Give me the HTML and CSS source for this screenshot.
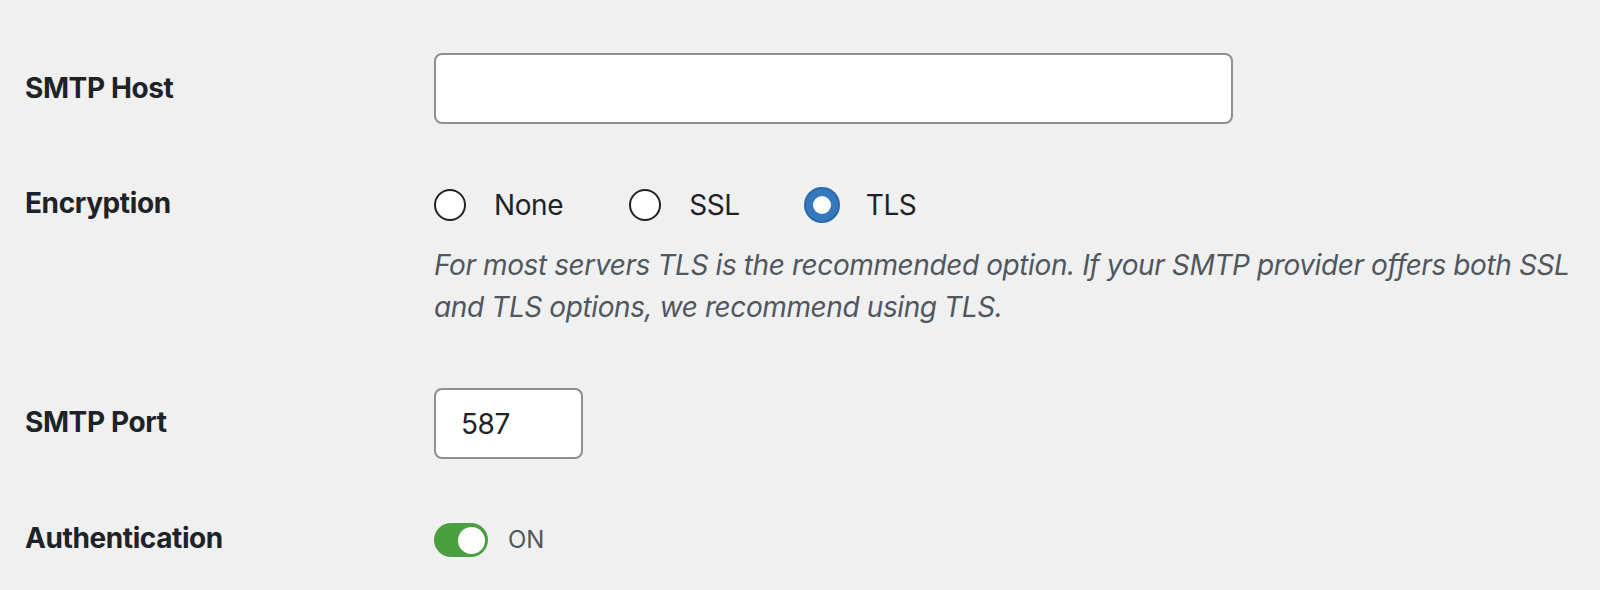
FILE: index.html
```html
<!DOCTYPE html>
<html lang="en">
<head>
<meta charset="utf-8">
<title>SMTP Settings</title>
<link rel="stylesheet" href="styles.css">
</head>
<body>
<div class="form">
  <div class="row row-host">
    <label class="label" for="host">SMTP Host</label>
    <div class="field">
      <input id="host" class="input input-wide" type="text" value="">
    </div>
  </div>

  <div class="row row-enc">
    <div class="label">Encryption</div>
    <div class="field">
      <div class="radios">
        <label class="option"><span class="radio"></span><span class="opt-text">None</span></label>
        <label class="option"><span class="radio"></span><span class="opt-text">SSL</span></label>
        <label class="option"><span class="radio checked"></span><span class="opt-text">TLS</span></label>
      </div>
      <p class="description">For most servers TLS is the recommended option. If your SMTP provider offers both SSL and TLS options, we recommend using TLS.</p>
    </div>
  </div>

  <div class="row row-port">
    <label class="label" for="port">SMTP Port</label>
    <div class="field">
      <input id="port" class="input input-small" type="text" value="587">
    </div>
  </div>

  <div class="row row-auth">
    <div class="label">Authentication</div>
    <div class="field toggle-field">
      <span class="toggle"><span class="knob"></span></span>
      <span class="toggle-text">ON</span>
    </div>
  </div>
</div>
</body>
</html>
```
FILE: styles.css
```css
html, body {
  margin: 0;
  padding: 0;
  background: #f0f0f1;
}

body {
  font-family: Inter, "Noto Sans", sans-serif;
  color: #1d2327;
  font-size: 28px;
  line-height: 42px;
}

.form {
  display: flex;
  flex-direction: column;
  padding-top: 53px;
}

.row {
  display: flex;
  align-items: flex-start;
  padding-left: 25px;
}

.label {
  width: 409px;
  flex: none;
  font-weight: 700;
  font-size: 28px;
  line-height: 42px;
  color: #1d2327;
  letter-spacing: -0.4px;
}

.field {
  flex: 1;
  min-width: 0;
}

.row-host .label { padding-top: 14px; }

.input {
  box-sizing: border-box;
  height: 71px;
  border: 2px solid #8c8f94;
  border-radius: 8px;
  background: #fff;
  font-family: inherit;
  font-size: 28px;
  letter-spacing: -0.4px;
  color: #1d2327;
  padding: 0 22px;
  margin: 0;
  outline: none;
  display: block;
}

.input-wide { width: 799px; }
.input-small { width: 149px; padding-left: 25px; }

.row-enc { margin-top: 60px; }
.row-enc .label { margin-top: -2px; }

.radios {
  display: flex;
  align-items: center;
  height: 42px;
}

.option {
  display: flex;
  align-items: center;
  margin-right: 66px;
  color: #1d2327;
  font-size: 28px;
  letter-spacing: -0.4px;
}

.radio {
  box-sizing: border-box;
  width: 32px;
  height: 32px;
  border-radius: 50%;
  border: 2px solid #1d2327;
  background: #fff;
  margin-right: 28px;
  flex: none;
  position: relative;
}

.radio.checked {
  border: none;
  background: #3479bd;
  box-shadow: 0 0 0 2px #2a6aab;
}

.radio.checked::after {
  content: "";
  position: absolute;
  left: 7px;
  top: 7px;
  width: 18px;
  height: 18px;
  border-radius: 50%;
  background: #fff;
}

.description {
  margin: 18px 0 0;
  font-style: italic;
  font-size: 28px;
  line-height: 42px;
  letter-spacing: -0.4px;
  color: #50575e;
  max-width: 1150px;
}

.row-port { margin-top: 60px; }
.row-port .label { padding-top: 13px; }

.row-auth { margin-top: 58px; }

.toggle-field {
  display: flex;
  align-items: center;
  padding-top: 6px;
}

.toggle {
  position: relative;
  width: 54px;
  height: 34px;
  border-radius: 17px;
  background: #4aa040;
  flex: none;
}

.knob {
  position: absolute;
  right: 3px;
  top: 3.5px;
  width: 27px;
  height: 27px;
  border-radius: 50%;
  background: #fff;
}

.toggle-text {
  margin-left: 20px;
  font-size: 24px;
  line-height: 34px;
  color: #50575e;
}
```
